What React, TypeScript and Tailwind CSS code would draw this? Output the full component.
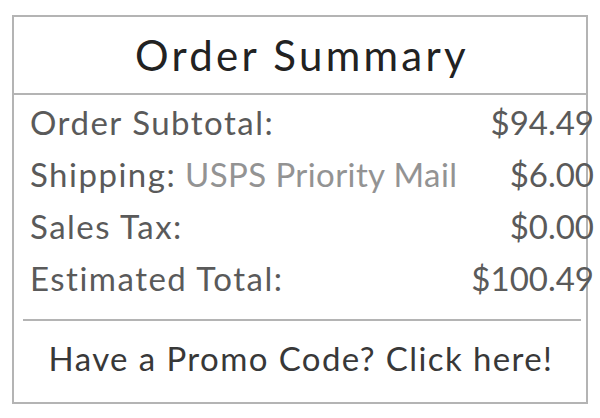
const rows = [
  { label: 'Order Subtotal:', value: '$94.49' },
  { label: 'Shipping:', note: 'USPS Priority Mail', value: '$6.00' },
  { label: 'Sales Tax:', value: '$0.00' },
  { label: 'Estimated Total:', value: '$100.49' },
];

const App = () => {
  return (
    <div className="min-h-[418px] bg-white pt-[15px] pl-[12px] font-['Lato',sans-serif]">
      <div className="w-[576px] border-2 border-[#b4b4b4] bg-white">
        <div className="flex h-[78px] items-center justify-center border-b-2 border-[#b4b4b4]">
          <h2 className="ml-[4px] text-[42px] leading-none tracking-[3.3px] text-[#222]">Order Summary</h2>
        </div>
        <div className="pt-[2px]">
          <div className="mr-[-8px] pl-[16px]">
            {rows.map((row) => (
              <div key={row.label} className="flex h-[52px] items-center justify-between text-[33px] text-[#5a5a5a]">
                <span className="tracking-[1.5px]">
                  {row.label}
                  {row.note && <span className="tracking-[0.4px] text-[#939393]"> {row.note}</span>}
                </span>
                <span>{row.value}</span>
              </div>
            ))}
          </div>
          <div className="mt-[14px] ml-[9px] mr-[5px] border-t-2 border-[#b4b4b4]" />
          <div className="flex h-[81px] items-center justify-center text-[33px] text-[#383838]">
            <a href="#" className="-mt-[6px] ml-[2px] tracking-[1.4px]">Have a Promo Code? Click here!</a>
          </div>
        </div>
      </div>
    </div>
  );
};

export default App;
